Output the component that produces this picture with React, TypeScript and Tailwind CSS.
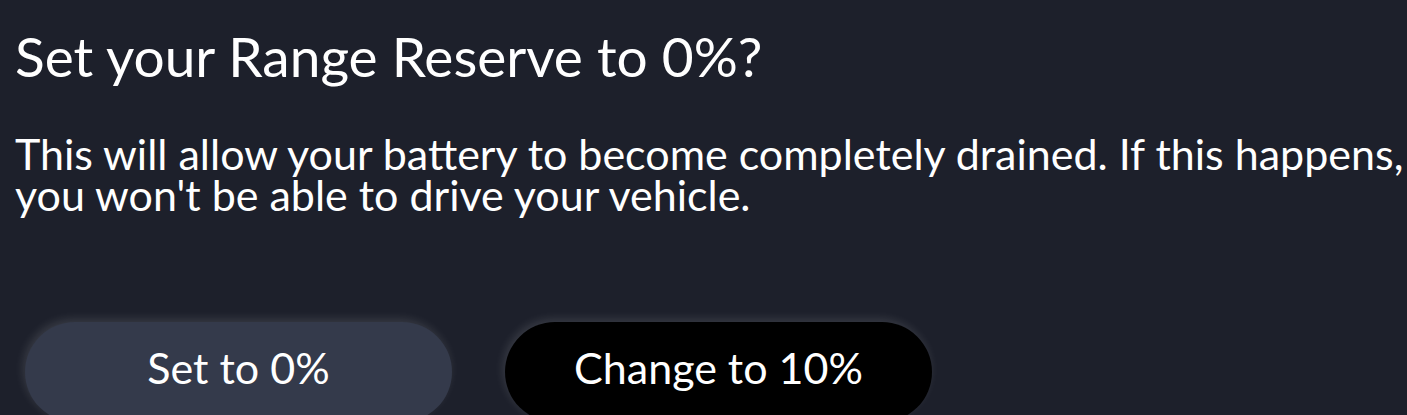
export default function App() {
  return (
    <div className="h-[415px] w-[1407px] overflow-hidden bg-[#1d202b] pl-[15px] pt-[22px] text-white [font-family:Lato,'Noto_Sans',sans-serif]">
      <h1 className="text-[55px] leading-[68px] font-normal">Set your Range Reserve to 0%?</h1>
      <p className="mt-[43px] text-[43px] leading-[41px]">
        This will allow your battery to become completely drained. If this happens, you won't be able to drive your vehicle.
      </p>
      <div className="mt-[107px] flex gap-[53px] pl-[10px]">
        <button className="h-[100px] w-[427px] shrink-0 rounded-full bg-[#343a4b] pb-[8px] text-[43px] shadow-[-2px_-3px_10px_rgba(255,255,255,0.12)]">
          Set to 0%
        </button>
        <button className="h-[100px] w-[427px] shrink-0 rounded-full bg-black pb-[8px] text-[43px] shadow-[-2px_-3px_10px_rgba(255,255,255,0.12)]">
          Change to 10%
        </button>
      </div>
    </div>
  );
}
